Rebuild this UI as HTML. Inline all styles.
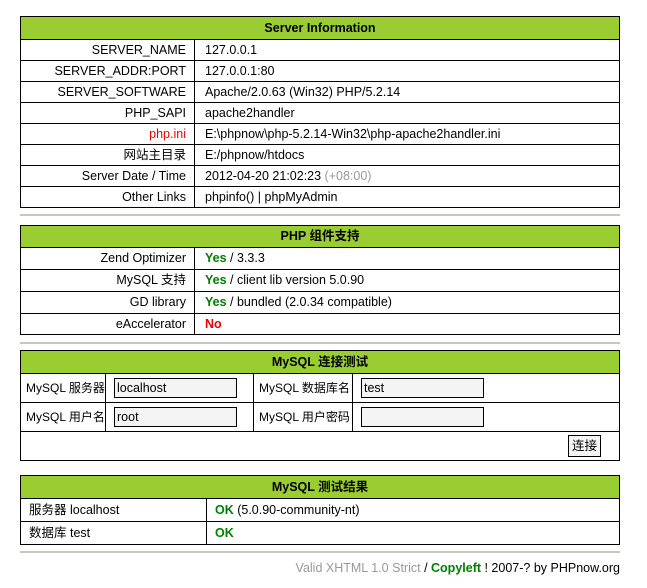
<!DOCTYPE html>
<html><head><meta charset="utf-8"><style>
body{margin:0;background:#fff;font-family:"Liberation Sans","Noto Sans CJK SC",sans-serif;font-size:12.5px;color:#000;}
.w{position:absolute;left:20px;width:600px;}
table{border-collapse:collapse;width:600px;table-layout:fixed;}
td,th{border:1px solid #000;padding:0 10px;white-space:nowrap;overflow:hidden;line-height:15px;}
th{background:#9acd32;font-weight:bold;text-align:center;}
.r{text-align:right;padding-right:8px;}
.g{color:#008000;font-weight:bold;}
.red{color:#e00;font-weight:bold;}
hr{position:absolute;left:20px;width:600px;border:0;border-top:2px solid #c8c8c0;margin:0;}
input{width:123px;border:1px solid #000;background:#f4f4f4;font:12.5px "Liberation Sans",sans-serif;padding:0 2px;box-sizing:border-box;height:20px;vertical-align:middle;}
.btn{display:inline-block;border:1px solid #000;background:#f4f4f4;padding:1px 3px;height:18px;line-height:18px;}
.m td{padding:0 8px;}
.m td.l{padding:0 3px 0 5px;font-size:12px;}
</style></head><body>
<div class="w" style="top:16px"><table>
<col style="width:174px"><col>
<tr style="height:23px"><th colspan="2">Server Information</th></tr>
<tr style="height:21px"><td class="r">SERVER_NAME</td><td>127.0.0.1</td></tr>
<tr style="height:21px"><td class="r">SERVER_ADDR:PORT</td><td>127.0.0.1:80</td></tr>
<tr style="height:21px"><td class="r">SERVER_SOFTWARE</td><td>Apache/2.0.63 (Win32) PHP/5.2.14</td></tr>
<tr style="height:21px"><td class="r">PHP_SAPI</td><td>apache2handler</td></tr>
<tr style="height:21px"><td class="r" style="color:#e00">php.ini</td><td>E:\phpnow\php-5.2.14-Win32\php-apache2handler.ini</td></tr>
<tr style="height:21px"><td class="r">网站主目录</td><td>E:/phpnow/htdocs</td></tr>
<tr style="height:21px"><td class="r">Server Date / Time</td><td>2012-04-20 21:02:23 <span style="color:#999">(+08:00)</span></td></tr>
<tr style="height:21px"><td class="r">Other Links</td><td>phpinfo() | phpMyAdmin</td></tr>
</table></div>
<hr style="top:214px">
<div class="w" style="top:225px"><table>
<col style="width:174px"><col>
<tr style="height:22px"><th colspan="2">PHP 组件支持</th></tr>
<tr style="height:22px"><td class="r">Zend Optimizer</td><td><span class="g">Yes</span> / 3.3.3</td></tr>
<tr style="height:22px"><td class="r">MySQL 支持</td><td><span class="g">Yes</span> / client lib version 5.0.90</td></tr>
<tr style="height:22px"><td class="r">GD library</td><td><span class="g">Yes</span> / bundled (2.0.34 compatible)</td></tr>
<tr style="height:21px"><td class="r">eAccelerator</td><td><span class="red">No</span></td></tr>
</table></div>
<hr style="top:342px">
<div class="w m" style="top:350px"><table>
<col style="width:85px"><col style="width:148px"><col style="width:99px"><col>
<tr style="height:23px"><th colspan="4">MySQL 连接测试</th></tr>
<tr style="height:29px"><td class="l">MySQL 服务器</td><td><input value="localhost"></td><td class="l">MySQL 数据库名</td><td><input value="test"></td></tr>
<tr style="height:29px"><td class="l">MySQL 用户名</td><td><input value="root"></td><td class="l">MySQL 用户密码</td><td><input value=""></td></tr>
<tr style="height:29px"><td colspan="4" style="text-align:right;padding-right:18px"><span class="btn">连接</span></td></tr>
</table></div>
<div class="w m" style="top:475px"><table>
<col style="width:186px"><col>
<tr style="height:23px"><th colspan="2">MySQL 测试结果</th></tr>
<tr style="height:23px"><td>服务器 localhost</td><td><span class="g">OK</span> (5.0.90-community-nt)</td></tr>
<tr style="height:23px"><td>数据库 test</td><td><span class="g">OK</span></td></tr>
</table></div>
<hr style="top:551px">
<div class="w" style="top:561px;text-align:right"><span style="color:#999">Valid XHTML 1.0 Strict</span> / <span class="g">Copyleft</span> ! 2007-? by PHPnow.org</div>
</body></html>
